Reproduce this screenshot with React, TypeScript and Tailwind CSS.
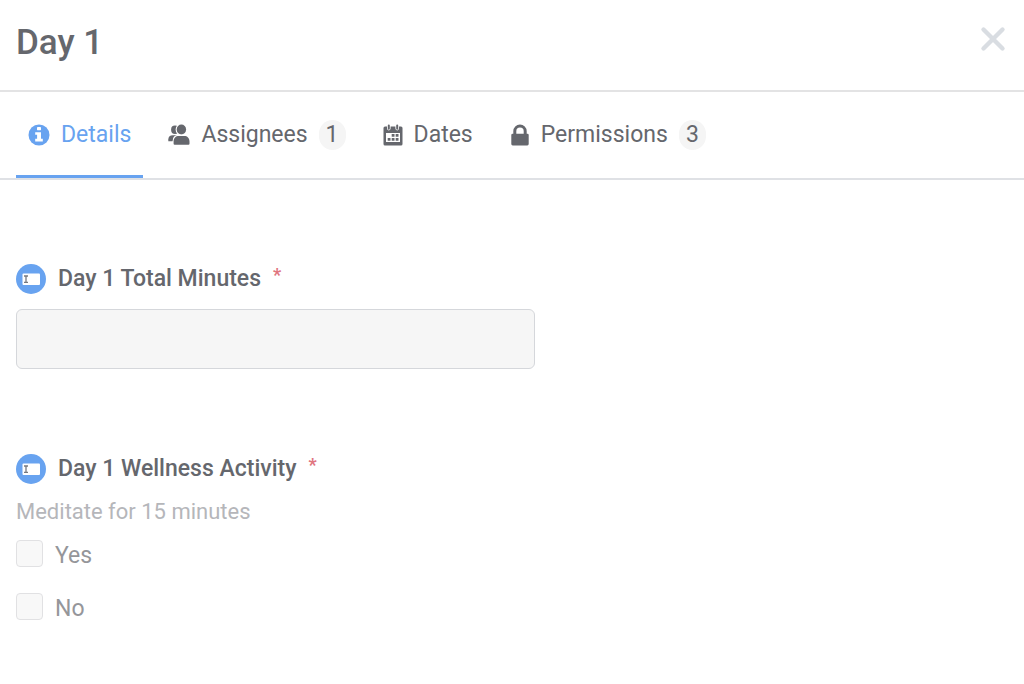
import { useId, useState } from 'react'
import type { ReactNode } from 'react'
import clsx from 'clsx'

const InfoIcon = () => (
  <svg viewBox="0 0 22 22" className="h-[22px] w-[22px]" aria-hidden="true">
    <circle cx="11" cy="11" r="10.5" fill="currentColor" />
    <rect x="9" y="3" width="4" height="3.2" rx="0.4" fill="#fff" />
    <path d="M7.2 8.2h5.8v6.6h1.8v2.6H7.2v-2.6h1.9v-4H7.2z" fill="#fff" />
  </svg>
)

const PeopleIcon = () => (
  <svg
    viewBox="0 0 22 22"
    className="h-[22px] w-[22px]"
    fill="currentColor"
    aria-hidden="true"
  >
    <ellipse cx="7" cy="5.8" rx="3.9" ry="4.2" />
    <path d="M0.3 17.2v-1.8c0-2.7 1.7-4.2 4.5-4.2h4v6z" />
    <g stroke="#fff" strokeWidth="2.2" paintOrder="stroke">
      <ellipse cx="13.4" cy="5.5" rx="4.7" ry="4.9" />
      <path d="M5.6 19.8v-2.4c0-3.5 2.2-5.5 5.2-5.5h5.4c3.1 0 5.3 2 5.3 5.5v2.4q0 1-1 1h-13.9q-1 0-1-1z" />
    </g>
  </svg>
)

const CalendarIcon = () => (
  <svg viewBox="0 0 20 22" className="h-[22px] w-5" aria-hidden="true">
    <path
      fill="currentColor"
      fillRule="evenodd"
      d="M2 2.5h16A1.5 1.5 0 0 1 19.5 4v16a1.5 1.5 0 0 1-1.5 1.5H2A1.5 1.5 0 0 1 .5 20V4A1.5 1.5 0 0 1 2 2.5zM3 9v9h14V9z"
    />
    <path
      fill="none"
      stroke="#fff"
      strokeWidth="3.6"
      strokeLinecap="round"
      d="M5.8 2v2.6M14.2 2v2.6"
    />
    <path
      fill="none"
      stroke="currentColor"
      strokeWidth="2"
      strokeLinecap="round"
      d="M5.8 1.5v3.2M14.2 1.5v3.2"
    />
    <path
      fill="currentColor"
      d="M8.7 9.9h2.8v2.8H8.7zM12.7 9.9h2.8v2.8h-2.8zM4.7 13.9h2.8v2.8H4.7zM8.7 13.9h2.8v2.8H8.7zM12.7 13.9h2.8v2.8h-2.8z"
    />
  </svg>
)

const LockIcon = () => (
  <svg viewBox="0 0 20 22" className="h-[22px] w-5" aria-hidden="true">
    <path
      fill="none"
      stroke="currentColor"
      strokeWidth="3"
      d="M4.8 11V7.2a5.2 5.2 0 0 1 10.4 0V11"
    />
    <rect x="1.3" y="9.7" width="17.4" height="11.8" rx="1.4" fill="currentColor" />
  </svg>
)

const TextFieldIcon = () => (
  <svg viewBox="0 0 30 30" className="h-[30px] w-[30px] shrink-0" aria-hidden="true">
    <circle cx="15" cy="15" r="15" fill="#68a3f0" />
    <rect x="6.5" y="9.5" width="17.5" height="11.5" rx="1" fill="#fff" />
    <path
      fill="none"
      stroke="#77797f"
      strokeWidth="1.3"
      d="M8 12h4M8 18.4h4M10 12v6.4"
    />
  </svg>
)

const CloseIcon = () => (
  <svg viewBox="0 0 26 26" className="h-[26px] w-[26px]" aria-hidden="true">
    <path
      fill="none"
      stroke="currentColor"
      strokeWidth="4.4"
      strokeLinecap="round"
      d="M3.5 3.5l19 19M22.5 3.5l-19 19"
    />
  </svg>
)

type Tab = {
  id: string
  label: string
  icon: ReactNode
  count?: number
}

const tabs: Tab[] = [
  { id: 'details', label: 'Details', icon: <InfoIcon /> },
  { id: 'assignees', label: 'Assignees', icon: <PeopleIcon />, count: 1 },
  { id: 'dates', label: 'Dates', icon: <CalendarIcon /> },
  { id: 'permissions', label: 'Permissions', icon: <LockIcon />, count: 3 },
]

type TabButtonProps = {
  tab: Tab
  selected: boolean
  onSelect: () => void
}

const TabButton = ({ tab, selected, onSelect }: TabButtonProps) => (
  <button
    type="button"
    role="tab"
    aria-selected={selected}
    onClick={onSelect}
    className={clsx(
      'flex h-[86px] cursor-pointer items-center gap-[11px] border-b-3 px-3 pt-0.5',
      selected ? 'border-[#68a3f0] text-[#68a3f0]' : 'border-transparent',
    )}
  >
    {tab.icon}
    {tab.label}
    {tab.count !== undefined && (
      <span className="flex h-[30px] items-center justify-center rounded-full bg-[#f5f5f5] px-[7px]">
        {tab.count}
      </span>
    )}
  </button>
)

const RequiredMark = () => (
  <span
    className="ml-3 self-start text-lg leading-6 font-bold text-[#e0757f]"
    aria-hidden="true"
  >
    *
  </span>
)

const options = ['Yes', 'No']

const App = () => {
  const [activeTab, setActiveTab] = useState('details')
  const minutesId = useId()

  return (
    <main className="bg-white pb-10 font-[Roboto,'Liberation_Sans',sans-serif] text-[23px] leading-8 text-[#65676d]">
      <header className="flex h-[92px] items-center justify-between border-b-2 border-[#e3e3e4] px-4 pb-1">
        <h1 className="text-[35px] leading-10 font-medium">Day 1</h1>
        <button
          type="button"
          aria-label="Close"
          className="mb-2 cursor-pointer px-0.5 text-[#d9dde2]"
        >
          <CloseIcon />
        </button>
      </header>

      <div role="tablist" className="flex gap-[13px] border-b-2 border-[#dfe1e5] px-4">
        {tabs.map((tab) => (
          <TabButton
            key={tab.id}
            tab={tab}
            selected={tab.id === activeTab}
            onSelect={() => setActiveTab(tab.id)}
          />
        ))}
      </div>

      <form className="flex flex-col gap-[84px] px-4 pt-[83px]">
        <div>
          <label htmlFor={minutesId} className="flex items-center font-medium">
            <TextFieldIcon />
            <span className="ml-3">Day 1 Total Minutes</span>
            <RequiredMark />
          </label>
          <input
            id={minutesId}
            type="text"
            disabled
            className="mt-3.5 block h-[60px] w-full max-w-[519px] rounded-md border border-[#d5d7db] bg-[#f6f6f6] px-4"
          />
        </div>

        <fieldset>
          <legend className="flex items-center font-medium">
            <TextFieldIcon />
            <span className="ml-3">Day 1 Wellness Activity</span>
            <RequiredMark />
          </legend>
          <p className="mt-[11px] text-[22px] leading-8 text-[#b5b6ba]">
            Meditate for 15 minutes
          </p>
          <div className="mt-3 flex flex-col gap-[21px] text-[#95969a]">
            {options.map((option) => (
              <label key={option} className="flex items-start gap-3">
                <input
                  type="checkbox"
                  disabled
                  className="h-[27px] w-[27px] appearance-none rounded-sm border border-[#e1e1e3] bg-[#f8f8f8]"
                />
                {option}
              </label>
            ))}
          </div>
        </fieldset>
      </form>
    </main>
  )
}

export default App
